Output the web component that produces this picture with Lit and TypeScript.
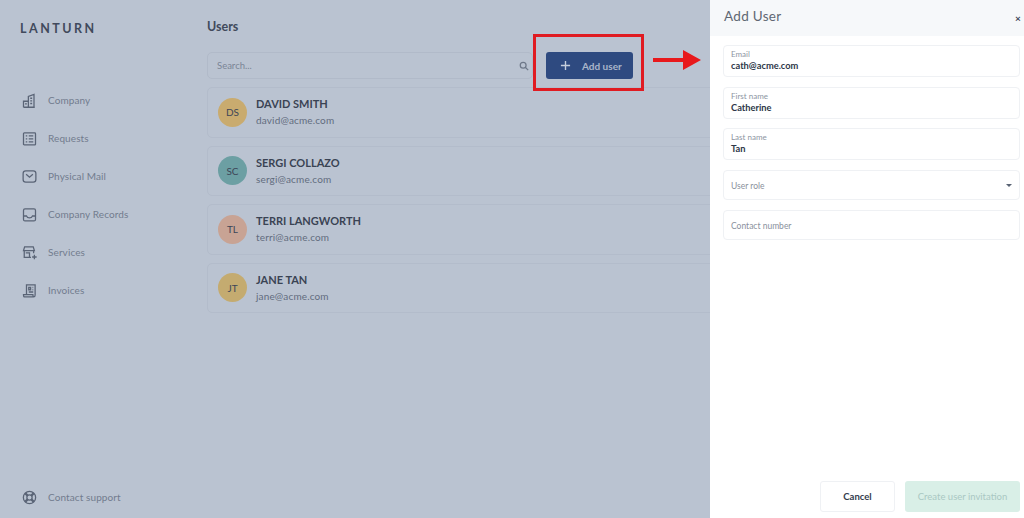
import { LitElement, html, css, svg } from "lit";
import { customElement } from "lit/decorators.js";

const icons: Record<string, unknown> = {
  company: svg`<path d="M2 19v-8h6.500v8M8.500 19V4.500L16 2v17zM2 19h15M11 7h2.500M11 10.500h2.500M11 14h2.500M4 14.500h2.500"/>`,
  requests: svg`<rect x="2" y="2.500" width="16" height="16" rx="1"/><path d="M5 6.500h2M9 6.500h6M5 10.500h2M9 10.500h6M5 14.500h2M9 14.500h6"/>`,
  mail: svg`<rect x="1.500" y="2.500" width="17" height="15" rx="3.500"/><path d="M5.500 7l4.500 4 4.500-4"/>`,
  records: svg`<rect x="2" y="2.500" width="16" height="16" rx="2"/><path d="M2 12h4c.8 2 2 2.600 4 2.600s3.200-.6 4-2.600h4"/>`,
  services: svg`<path d="M3.500 2.500h11.500l1.500 5H2zM3 7.500v9h9M15.500 7.500v3.500M5 10.500h5v6H5M16.500 13v6M13.500 16h6"/>`,
  invoices: svg`<path d="M6 15.500V2.500h11.500V16c0 1.500-.8 2.500-2 2.500H3.500c-1 0-1.500-1.200-1.500-3zM2 15.500h12.500c0 1.200.3 2.300 1 3M9 6h2.500v3H9zM14 6h1M14 9h1M9 12h6"/>`,
};

type User = { i: string; name: string; email: string; color: string };
const users: User[] = [
  { i: "DS", name: "DAVID SMITH", email: "david@acme.com", color: "#c9ab6f" },
  { i: "SC", name: "SERGI COLLAZO", email: "sergi@acme.com", color: "#6c9fa3" },
  { i: "TL", name: "TERRI LANGWORTH", email: "terri@acme.com", color: "#c8a394" },
  { i: "JT", name: "JANE TAN", email: "jane@acme.com", color: "#c4ab70" },
];
const nav = [
  ["company", "Company"],
  ["requests", "Requests"],
  ["mail", "Physical Mail"],
  ["records", "Company Records"],
  ["services", "Services"],
  ["invoices", "Invoices"],
];

@customElement("app-root")
export class AppRoot extends LitElement {
  static styles = css`
    :host {
      display: block;
      font-family: Lato, "Open Sans", sans-serif;
    }
    .page {
      position: relative;
      width: 1024px;
      height: 518px;
      overflow: hidden;
      display: flex;
      background: #bac3d1;
      color: #3c4557;
    }
    .side {
      width: 207px;
      flex: none;
      display: flex;
      flex-direction: column;
      padding: 21px 0 10px 20px;
      box-sizing: border-box;
    }
    .logo {
      font-size: 12.500px;
      line-height: 16px;
      font-weight: 700;
      letter-spacing: 2.500px;
      color: #414a5c;
    }
    .nav {
      display: flex;
      flex-direction: column;
      gap: 16px;
      margin-top: 52px;
    }
    .nav-item {
      display: flex;
      align-items: center;
      gap: 11px;
      height: 22px;
      padding-left: 2px;
      font-size: 10px;
      color: #727c8e;
      letter-spacing: 0.1px;
    }
    .nav-item svg {
      width: 15px;
      height: 15px;
      flex: none;
      fill: none;
      stroke: #5a6476;
      stroke-width: 1.700;
    }
    .spacer {
      flex: 1;
    }
    .main {
      width: 510px;
      flex: none;
    }
    .title {
      font-size: 12.500px;
      line-height: 16px;
      font-weight: 700;
      margin-top: 19px;
      color: #414a5c;
    }
    .tools {
      display: flex;
      align-items: center;
      margin-top: 17px;
      gap: 13px;
    }
    .search {
      width: 326px;
      height: 27px;
      box-sizing: border-box;
      border: 1px solid #b1bac9;
      border-radius: 5px;
      display: flex;
      align-items: center;
      justify-content: space-between;
      padding: 0 3px 0 9px;
      font-size: 9.500px;
      color: #7b8596;
    }
    .search svg {
      width: 10px;
      height: 10px;
      fill: none;
      stroke: #6e7889;
      stroke-width: 1.500;
    }
    .add {
      width: 87px;
      height: 27px;
      border-radius: 3px;
      background: #2e4a80;
      color: #aab6ca;
      display: flex;
      align-items: center;
      gap: 11px;
      padding-left: 14px;
      box-sizing: border-box;
      font-size: 10px;
      font-weight: 700;
    }
    .add svg {
      width: 11px;
      height: 11px;
      stroke: #c5cedc;
      stroke-width: 1.500;
      fill: none;
    }
    .list {
      display: flex;
      flex-direction: column;
      gap: 8px;
      margin-top: 8px;
    }
    .card {
      height: 50.500px;
      box-sizing: border-box;
      border: 1px solid #b3bccb;
      border-radius: 5px;
      display: flex;
      align-items: center;
      gap: 9px;
      padding-left: 10px;
    }
    .avatar {
      width: 29px;
      height: 29px;
      border-radius: 50%;
      display: flex;
      align-items: center;
      justify-content: center;
      font-size: 10px;
      color: #3d4658;
      flex: none;
    }
    .who {
      padding-top: 1px;
    }
    .name {
      font-size: 11px;
      line-height: 15px;
      font-weight: 700;
      color: #3a4354;
      margin-top: -2px;
    }
    .email {
      font-size: 10px;
      line-height: 14px;
      margin-top: 2px;
      color: #626c7e;
      letter-spacing: 0.15px;
    }
    .panel {
      position: absolute;
      left: 710px;
      top: 0;
      width: 314px;
      height: 518px;
      background: #fff;
      display: flex;
      flex-direction: column;
    }
    .phead {
      height: 36px;
      flex: none;
      background: #f6f8fa;
      display: flex;
      align-items: center;
      justify-content: space-between;
      padding: 0 0 4px 14px;
      font-size: 13.500px;
      color: #5f6773;
      letter-spacing: 0.3px;
      box-sizing: border-box;
    }
    .close {
      font-size: 10px;
      line-height: 10px;
      color: #3c4557;
      font-weight: 700;
      width: 9px;
      margin-top: 3px;
    }
    .fields {
      display: flex;
      flex-direction: column;
      padding: 9px 4px 0 13px;
    }
    .field {
      height: 32px;
      box-sizing: border-box;
      border: 1px solid #eff1f4;
      border-radius: 4px;
      padding: 1px 7px 2px;
      display: flex;
      flex-direction: column;
      justify-content: center;
      margin-bottom: 9.500px;
    }
    .label {
      font-size: 8px;
      line-height: 10px;
      color: #8d95a2;
    }
    .value {
      font-size: 9.300px;
      line-height: 13px;
      font-weight: 700;
      color: #2e3748;
    }
    .plain {
      height: 30.500px;
      font-size: 8.500px;
      color: #8a919d;
      flex-direction: row;
      align-items: center;
      justify-content: space-between;
      padding: 2px 7px 0;
    }
    .caret {
      width: 0;
      height: 0;
      border-left: 3.500px solid transparent;
      border-right: 3.500px solid transparent;
      border-top: 3.500px solid #596273;
    }
    .pfoot {
      margin-top: auto;
      display: flex;
      justify-content: flex-end;
      gap: 10px;
      padding: 0 4px 6px 0;
    }
    .btn {
      height: 31px;
      border-radius: 3px;
      display: flex;
      align-items: center;
      justify-content: center;
      font-size: 9.500px;
      box-sizing: border-box;
    }
    .cancel {
      width: 75px;
      border: 1px solid #eff1f4;
      font-weight: 700;
      color: #333c4d;
    }
    .create {
      width: 115px;
      background: #d9efe7;
      color: #a9c8c3;
    }
    .hl {
      position: absolute;
      left: 533px;
      top: 34px;
      width: 111px;
      height: 57px;
      box-sizing: border-box;
      border: 3px solid #e01b22;
    }
    .arrow {
      position: absolute;
      left: 652px;
      top: 49px;
      width: 50px;
      height: 22px;
    }
  `;

  render() {
    return html`
      <div class="page">
        <aside class="side">
          <div class="logo">LANTURN</div>
          <nav class="nav">
            ${nav.map(
              ([k, t]) => html`<div class="nav-item">
                <svg viewBox="0 0 20 20">${icons[k]}</svg><span>${t}</span>
              </div>`
            )}
          </nav>
          <div class="spacer"></div>
          <div class="nav-item">
            <svg viewBox="0 0 20 20">
              <circle cx="10" cy="10" r="8.200" />
              <circle cx="10" cy="10" r="3.500" />
              <path d="M4.200 4.200l3.300 3.300M15.800 4.200l-3.300 3.300M4.200 15.800l3.300-3.300M15.800 15.800l-3.300-3.300" stroke-width="3" />
            </svg>
            <span>Contact support</span>
          </div>
        </aside>
        <main class="main">
          <div class="title">Users</div>
          <div class="tools">
            <div class="search">
              <span>Search...</span>
              <svg viewBox="0 0 12 12"><circle cx="5" cy="5" r="3.500" /><path d="M7.500 7.500L11 11" /></svg>
            </div>
            <div class="add">
              <svg viewBox="0 0 12 12"><path d="M6 1v10M1 6h10" /></svg>
              <span>Add user</span>
            </div>
          </div>
          <div class="list">
            ${users.map(
              (u) => html`<div class="card">
                <div class="avatar" style="background:${u.color}">${u.i}</div>
                <div class="who">
                  <div class="name">${u.name}</div>
                  <div class="email">${u.email}</div>
                </div>
              </div>`
            )}
          </div>
        </main>
        <section class="panel">
          <div class="phead"><span>Add User</span><span class="close">×</span></div>
          <div class="fields">
            <div class="field"><div class="label">Email</div><div class="value">cath@acme.com</div></div>
            <div class="field"><div class="label">First name</div><div class="value">Catherine</div></div>
            <div class="field"><div class="label">Last name</div><div class="value">Tan</div></div>
            <div class="field plain"><span>User role</span><span class="caret"></span></div>
            <div class="field plain"><span>Contact number</span></div>
          </div>
          <div class="pfoot">
            <div class="btn cancel">Cancel</div>
            <div class="btn create">Create user invitation</div>
          </div>
        </section>
        <div class="hl"></div>
        <svg class="arrow" viewBox="0 0 50 22">
          <path d="M1 9h30V1l18 10-18 10v-8H1z" fill="#e8191c" />
        </svg>
      </div>
    `;
  }
}
